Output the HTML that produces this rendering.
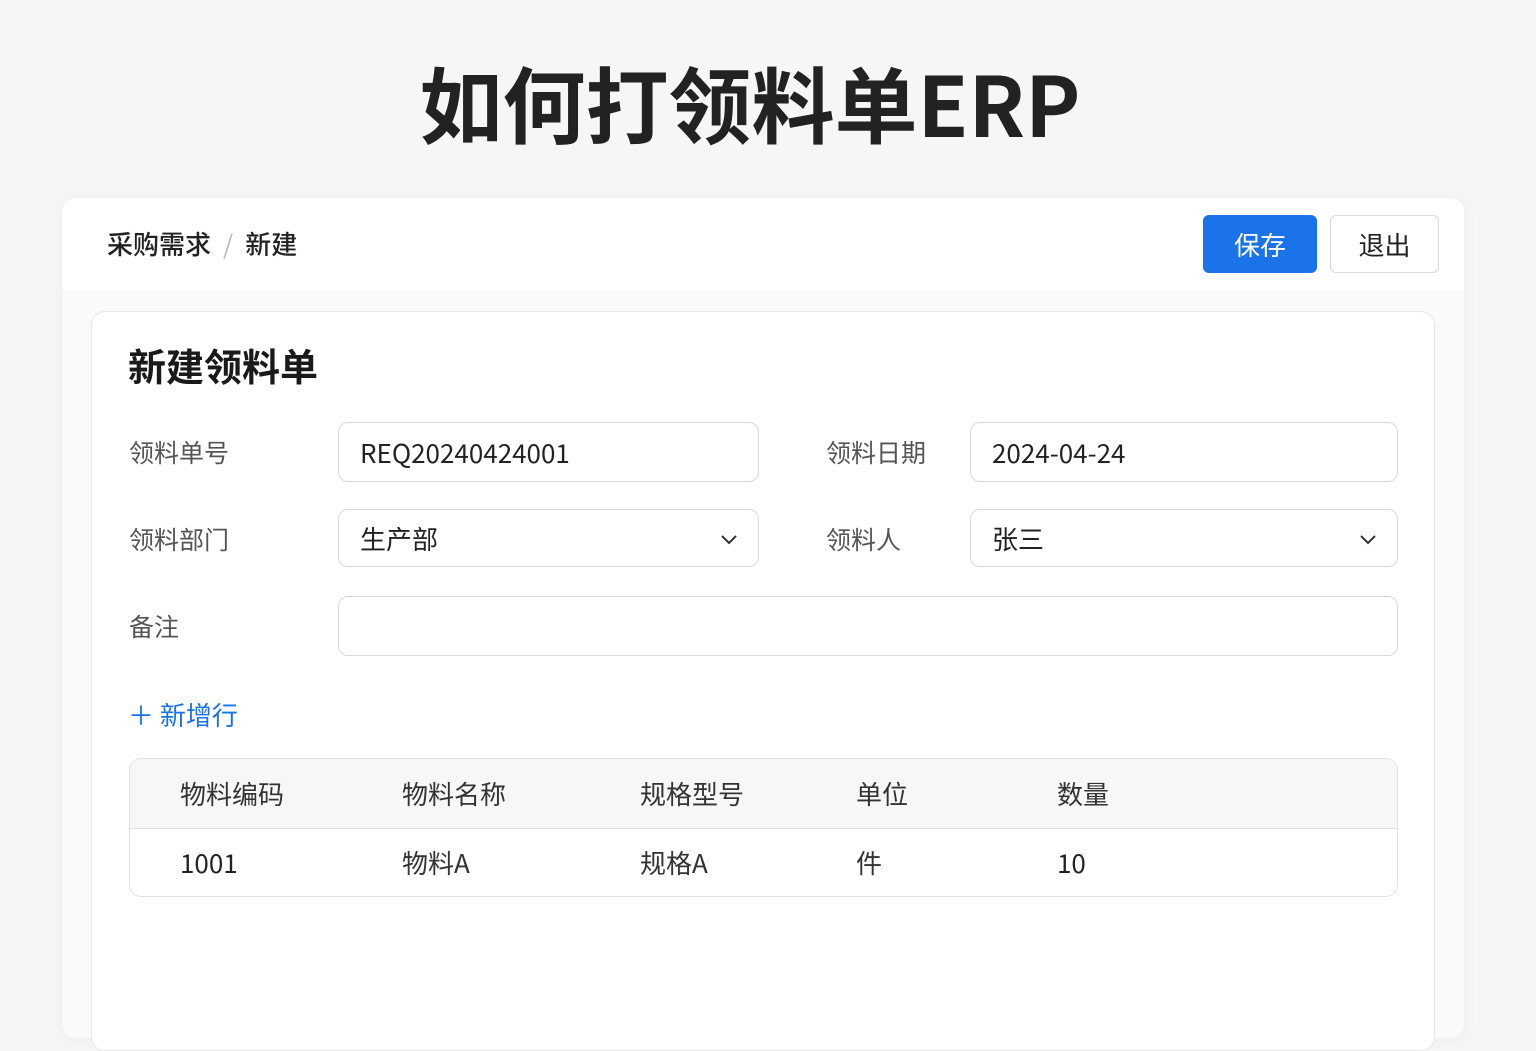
<!DOCTYPE html>
<html><head><meta charset="utf-8"><style>
*{box-sizing:border-box;margin:0;padding:0}
body{width:1536px;height:1024px;overflow:hidden;background:#f6f6f7;font-family:"Noto Sans CJK SC","Liberation Sans",sans-serif;color:#222;position:relative}
.abs{position:absolute}
h1{position:absolute;left:0;width:1500px;text-align:center;top:46px;font-size:83px;font-weight:700;color:#222;line-height:110px}
.outer{left:62px;top:198px;width:1402px;height:840px;background:#fafafa;border-radius:14px;box-shadow:0 2px 16px rgba(0,0,0,.04)}
.head{left:62px;top:198px;width:1402px;height:92px;background:#fff;border-radius:14px 14px 0 0}
.crumb{left:107px;top:226px;font-size:26px;color:#222;font-weight:500;line-height:36px}
.crumb span{color:#bbb;margin:0 12px;font-weight:400}
.btn{top:215px;height:58px;border-radius:6px;font-size:26px;display:flex;align-items:center;justify-content:center}
.inner{left:91px;top:311px;width:1344px;height:740px;background:#fff;border:1px solid #e8e8e8;border-radius:14px}
.lab{font-size:25px;color:#555;line-height:36px}
.inp{border:1px solid #d9d9d9;border-radius:10px;background:#fff;font-size:26px;color:#222;padding-left:21px;display:flex;align-items:center}
.chev{position:absolute;right:20px;top:20px}
.tbl{left:129px;top:758px;width:1269px;height:139px;border:1px solid #e2e2e2;border-radius:12px;overflow:hidden}
.th{position:absolute;left:0;top:0;width:100%;height:70px;background:#f7f7f7;border-bottom:1px solid #e2e2e2}
.c{position:absolute;font-size:26px;color:#333;line-height:36px}
</style></head><body>
<h1>如何打领料单ERP</h1>
<div class="abs outer"></div>
<div class="abs head"></div>
<div class="abs crumb">采购需求<span>/</span>新建</div>
<div class="abs btn" style="left:1203px;width:114px;background:#1a73e8;color:#fff">保存</div>
<div class="abs btn" style="left:1330px;width:109px;background:#fff;border:1px solid #d9d9d9;color:#222">退出</div>
<div class="abs inner"></div>
<div class="abs" style="left:128px;top:340px;font-size:38px;font-weight:700;color:#1a1a1a;line-height:50px">新建领料单</div>
<div class="abs lab" style="left:129px;top:434px">领料单号</div>
<div class="abs inp" style="left:338px;top:422px;width:421px;height:60px">REQ20240424001</div>
<div class="abs lab" style="left:826px;top:434px">领料日期</div>
<div class="abs inp" style="left:970px;top:422px;width:428px;height:60px">2024-04-24</div>
<div class="abs lab" style="left:129px;top:521px">领料部门</div>
<div class="abs inp" style="left:338px;top:509px;width:421px;height:58px">生产部<svg class="chev" width="18" height="18" viewBox="0 0 18 18"><path d="M2 6l7 7 7-7" fill="none" stroke="#333" stroke-width="2"/></svg></div>
<div class="abs lab" style="left:826px;top:521px">领料人</div>
<div class="abs inp" style="left:970px;top:509px;width:428px;height:58px">张三<svg class="chev" width="18" height="18" viewBox="0 0 18 18"><path d="M2 6l7 7 7-7" fill="none" stroke="#333" stroke-width="2"/></svg></div>
<div class="abs lab" style="left:129px;top:608px">备注</div>
<div class="abs inp" style="left:338px;top:596px;width:1060px;height:60px"></div>
<div class="abs" style="left:128px;top:697px;font-size:26px;color:#1a73e8;line-height:36px">＋ 新增行</div>
<div class="abs tbl"><div class="th"></div>
<div class="c" style="left:50px;top:17px">物料编码</div>
<div class="c" style="left:272px;top:17px">物料名称</div>
<div class="c" style="left:510px;top:17px">规格型号</div>
<div class="c" style="left:726px;top:17px">单位</div>
<div class="c" style="left:927px;top:17px">数量</div>
<div class="c" style="left:50px;top:86px;color:#222">1001</div>
<div class="c" style="left:272px;top:86px">物料A</div>
<div class="c" style="left:510px;top:86px">规格A</div>
<div class="c" style="left:726px;top:86px">件</div>
<div class="c" style="left:927px;top:86px;color:#222">10</div>
</div>
</body></html>
